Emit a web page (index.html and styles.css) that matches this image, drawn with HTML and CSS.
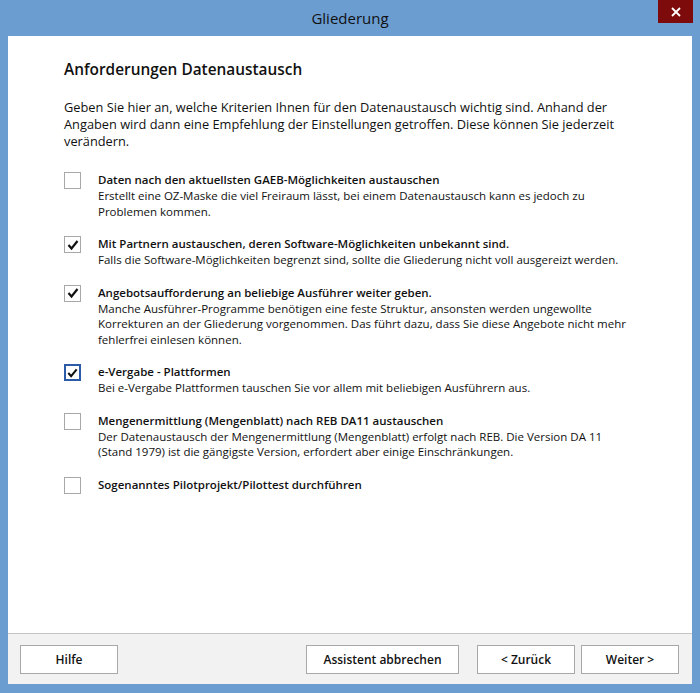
FILE: index.html
```html
<!DOCTYPE html>
<html lang="de">
<head>
  <meta charset="UTF-8">
  <title>Gliederung</title>
  <link rel="stylesheet" href="styles.css">
</head>
<body>

  <div class="window">
    <div class="titlebar">
      <div></div>
      <div class="title">Gliederung</div>
      <div class="close">
        <svg width="10" height="10" viewBox="0 0 10 10"><path d="M1 1 L9 9 M9 1 L1 9" stroke="#fff" stroke-width="1.8"/></svg>
      </div>
    </div>

    <div class="client">
      <div class="content">
        <h2>Anforderungen Datenaustausch</h2>
        <p class="intro">Geben Sie hier an, welche Kriterien Ihnen für den Datenaustausch wichtig sind. Anhand der Angaben wird dann eine Empfehlung der Einstellungen getroffen. Diese können Sie jederzeit verändern.</p>

        <div class="option">
          <div class="box"></div>
          <div class="text">
            <div class="label">Daten nach den aktuellsten GAEB-Möglichkeiten austauschen</div>
            <div class="desc">Erstellt eine OZ-Maske die viel Freiraum lässt, bei einem Datenaustausch kann es jedoch zu Problemen kommen.</div>
          </div>
        </div>

        <div class="option">
          <div class="box">
            <svg width="14" height="14" viewBox="0 0 14 14"><path d="M2.5 7 L5.5 10.5 L11.5 3" fill="none" stroke="#111" stroke-width="2.2"/></svg>
          </div>
          <div class="text">
            <div class="label">Mit Partnern austauschen, deren Software-Möglichkeiten unbekannt sind.</div>
            <div class="desc">Falls die Software-Möglichkeiten begrenzt sind, sollte die Gliederung nicht voll ausgereizt werden.</div>
          </div>
        </div>

        <div class="option">
          <div class="box">
            <svg width="14" height="14" viewBox="0 0 14 14"><path d="M2.5 7 L5.5 10.5 L11.5 3" fill="none" stroke="#111" stroke-width="2.2"/></svg>
          </div>
          <div class="text">
            <div class="label">Angebotsaufforderung an beliebige Ausführer weiter geben.</div>
            <div class="desc">Manche Ausführer-Programme benötigen eine feste Struktur, ansonsten werden ungewollte Korrekturen an der Gliederung vorgenommen. Das führt dazu, dass Sie diese Angebote nicht mehr fehlerfrei einlesen können.</div>
          </div>
        </div>

        <div class="option">
          <div class="box focus">
            <svg width="14" height="14" viewBox="0 0 14 14"><path d="M2.5 7 L5.5 10.5 L11.5 3" fill="none" stroke="#111" stroke-width="2.2"/></svg>
          </div>
          <div class="text">
            <div class="label">e-Vergabe - Plattformen</div>
            <div class="desc">Bei e-Vergabe Plattformen tauschen Sie vor allem mit beliebigen Ausführern aus.</div>
          </div>
        </div>

        <div class="option">
          <div class="box"></div>
          <div class="text">
            <div class="label">Mengenermittlung (Mengenblatt) nach REB DA11 austauschen</div>
            <div class="desc">Der Datenaustausch der Mengenermittlung (Mengenblatt) erfolgt nach REB. Die Version DA 11 (Stand 1979) ist die gängigste Version, erfordert aber einige Einschränkungen.</div>
          </div>
        </div>

        <div class="option">
          <div class="box"></div>
          <div class="text">
            <div class="label">Sogenanntes Pilotprojekt/Pilottest durchführen</div>
          </div>
        </div>
      </div>

      <div class="footer">
        <button class="btn">Hilfe</button>
        <div class="spacer"></div>
        <button class="btn wide">Assistent abbrechen</button>
        <button class="btn">&lt; Zurück</button>
        <button class="btn">Weiter &gt;</button>
      </div>
    </div>
  </div>

</body>
</html>
```

FILE: styles.css
```css
body {
  margin: 0;
  font-family: "Open Sans", "Noto Sans", sans-serif;
  background-color: #6b9dd1;
}

.window {
  width: 700px;
  height: 693px;
  display: flex;
  flex-direction: column;
  background-color: #6b9dd1;
}

.titlebar {
  height: 36px;
  display: grid;
  grid-template-columns: 1fr auto 1fr;
}

.title {
  font-size: 15px;
  line-height: 36px;
  color: #111;
}

.close {
  justify-self: end;
  width: 35px;
  height: 23px;
  margin-right: 7px;
  background-color: #7e0b0b;
  display: flex;
  align-items: center;
  justify-content: center;
}

.client {
  flex: 1;
  margin: 0 8px 9px;
  background-color: #fff;
  display: flex;
  flex-direction: column;
}

.content {
  flex: 1;
  padding: 23px 60px 0 56px;
  color: #111;
}

h2 {
  margin: 0 0 19px;
  font-size: 15.4px;
  font-weight: 600;
}

.intro {
  margin: 0 0 21px;
  font-size: 12.8px;
  line-height: 17px;
}

.option {
  display: flex;
  gap: 17px;
  margin-bottom: 16px;
}

.box {
  flex: none;
  width: 15px;
  height: 15px;
  margin-top: 1px;
  border: 1px solid #a8a8a8;
  background-color: #fff;
  display: flex;
  align-items: center;
  justify-content: center;
}

.box.focus {
  border: 2px solid #2a5aa8;
  width: 13px;
  height: 13px;
}

.label {
  font-size: 11.5px;
  font-weight: 600;
  line-height: 17px;
}

.desc {
  font-size: 11.5px;
  line-height: 15.5px;
}

.footer {
  height: 50px;
  border-top: 1px solid #c4c4c4;
  background-color: #f2f2f2;
  display: flex;
  align-items: center;
  padding: 0 13px 0 12px;
  gap: 6px;
}

.spacer {
  flex: 1;
}

.btn {
  width: 98px;
  height: 29px;
  border: 1px solid #a8a8a8;
  background-color: #fff;
  font-family: "Open Sans", "Noto Sans", sans-serif;
  font-size: 12px;
  font-weight: 600;
  color: #111;
}

.btn.wide {
  width: 153px;
  margin-right: 12px;
}
```
